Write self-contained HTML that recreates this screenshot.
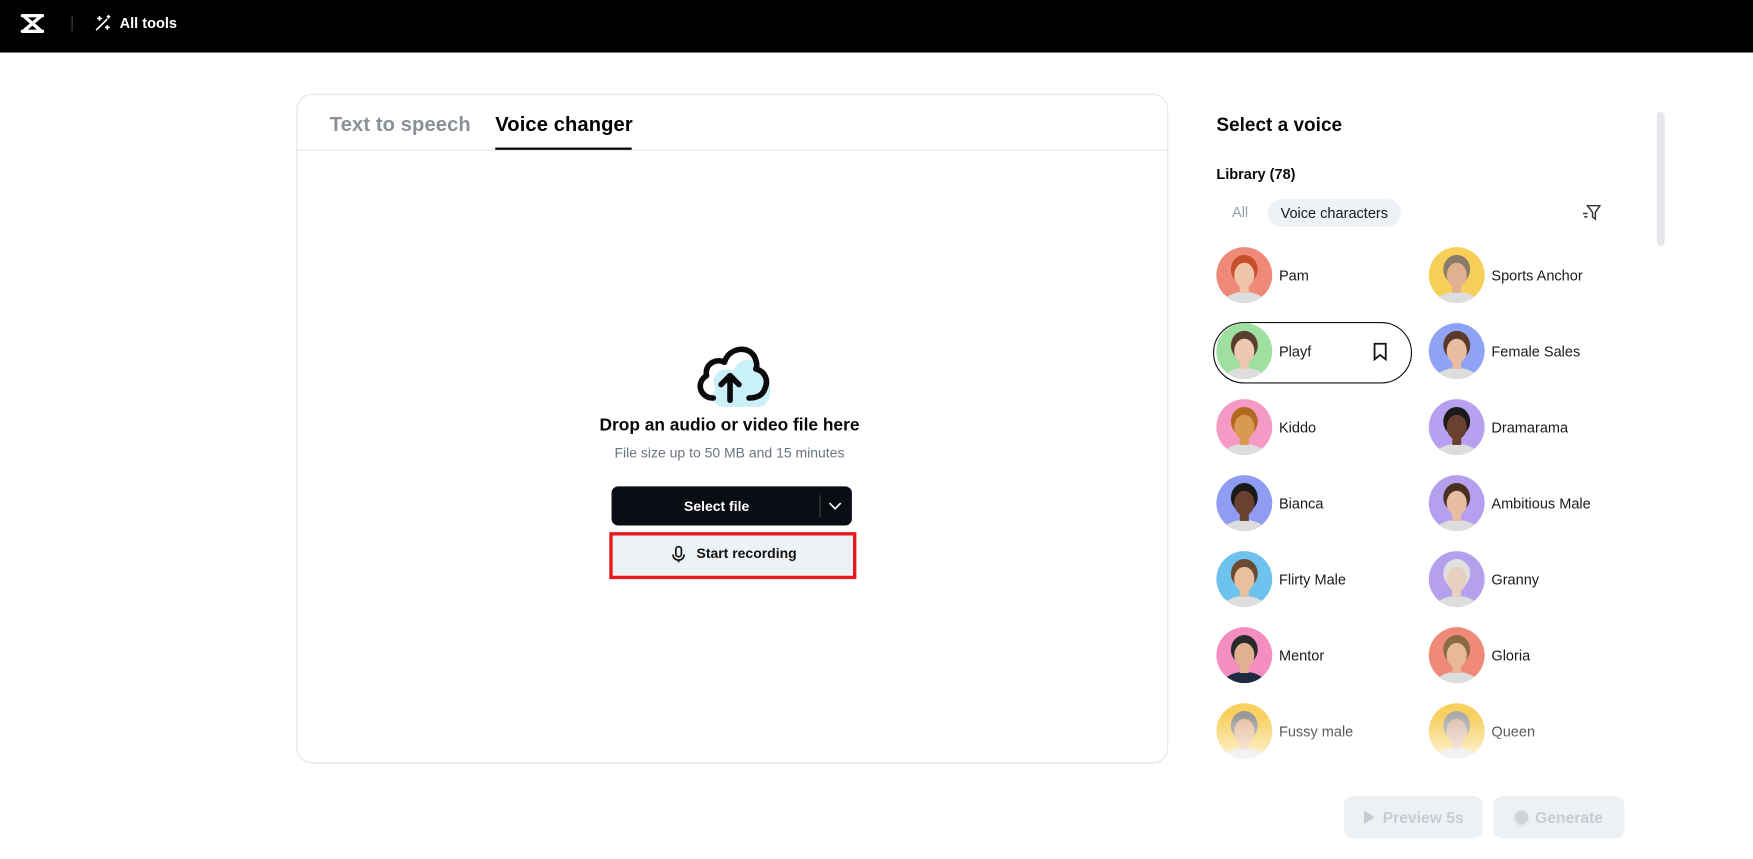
<!DOCTYPE html>
<html><head><meta charset="utf-8"><style>
*{box-sizing:border-box;margin:0;padding:0}
html,body{width:1753px;height:858px;overflow:hidden;background:#fff;font-family:"Liberation Sans",sans-serif}
#w{position:absolute;left:0;top:0;width:1568px;height:768px;transform:scale(1.11798);transform-origin:0 0}
.hdr{position:absolute;left:0;top:0;width:1568px;height:47px;background:#000}
.abs{position:absolute}
.card{position:absolute;left:265px;top:84px;width:780px;height:599px;border:1px solid #e3e5e8;border-radius:14px}
.tab{position:absolute;top:101px;font-size:18px;font-weight:bold;letter-spacing:.1px}
.av{position:absolute;width:50px;height:50px;border-radius:50%;overflow:hidden}
.nm{position:absolute;font-size:13px;color:#1a1a1a}
.btn2{position:absolute;top:712px;height:38px;background:#eef1f4;border-radius:8px;color:#c4ccd5;font-size:14px;font-weight:bold;display:flex;align-items:center;justify-content:center;gap:6px}
</style></head><body><div id="w">
<div class="hdr">
<svg class="abs" style="left:18px;top:11px" width="22" height="20" viewBox="0 0 22 20"><path d="M2 3 L20 3 M2 17 L20 17 M4 4 L18 16 M18 4 L4 16" stroke="#fff" stroke-width="3" fill="none" stroke-linecap="round"/></svg>
<div class="abs" style="left:64px;top:14px;width:1px;height:14px;background:#444"></div>
<svg class="abs" style="left:84px;top:13px" width="16" height="16" viewBox="0 0 16 16" fill="none" stroke="#fff" stroke-width="1.5"><path d="M2 14 L12 4"/><path d="M5 2 v3 M3.5 3.5 h3 M12 10 v3 M10.5 11.5 h3 M13 1v2 M12 2h2" stroke-linecap="round"/></svg>
<div class="abs" style="left:107px;top:13px;color:#fff;font-size:13px;font-weight:bold">All tools</div>
</div>

<div class="card"></div>
<div class="tab" style="left:295px;color:#8b9097">Text to speech</div>
<div class="tab" style="left:443px;color:#000">Voice changer</div>
<div class="abs" style="left:266px;top:134px;width:778px;height:1px;background:#e6e8eb"></div>
<div class="abs" style="left:443px;top:132px;width:122px;height:2px;background:#000"></div>

<svg class="abs" style="left:620px;top:306px" width="72" height="60" viewBox="0 0 72 60">
<path d="M30 58 C18 58 14 50 20 42 C14 30 26 20 36 26 C42 10 62 14 62 30 C72 32 72 58 58 58 Z" fill="#c9f1f7"/>
<path d="M18 50 C6 50 2 36 12 30 C10 20 20 14 28 18 C32 4 52 2 56 16 C58 22 56 24 56 24 C64 26 68 34 64 42 C62 48 56 50 50 50" fill="none" stroke="#0a0a0a" stroke-width="5" stroke-linecap="round" stroke-linejoin="round"/>
<path d="M33 52 V30 M25 38 L33 30 L41 38" fill="none" stroke="#0a0a0a" stroke-width="5" stroke-linecap="round" stroke-linejoin="round"/>
</svg>
<div class="abs" style="left:455px;width:395px;top:372px;text-align:center;font-size:15.5px;font-weight:bold;color:#0a0a0a">Drop an audio or video file here</div>
<div class="abs" style="left:455px;width:395px;top:398px;text-align:center;font-size:12.5px;color:#6b7280">File size up to 50 MB and 15 minutes</div>
<div class="abs" style="left:547px;top:435px;width:215px;height:35px;background:#0b0d14;border-radius:6px"></div>
<div class="abs" style="left:547px;top:446px;width:188px;text-align:center;color:#fff;font-size:12.5px;font-weight:bold">Select file</div>
<div class="abs" style="left:733px;top:443px;width:1px;height:20px;background:#444"></div>
<svg class="abs" style="left:741px;top:449px" width="12" height="8" viewBox="0 0 12 8"><path d="M1 1 L6 6 L11 1" stroke="#fff" stroke-width="1.5" fill="none"/></svg>
<div class="abs" style="left:545px;top:476px;width:221px;height:42px;border:3px solid #e6191c;background:#eff2f5"></div>
<svg class="abs" style="left:601px;top:488px" width="12" height="16" viewBox="0 0 12 16" fill="none" stroke="#111" stroke-width="1.5"><rect x="3.5" y="1" width="5" height="9" rx="2.5"/><path d="M1 8 a5 5 0 0 0 10 0 M6 13 v2"/></svg>
<div class="abs" style="left:623px;top:488px;font-size:12.5px;font-weight:bold;color:#111">Start recording</div>

<div class="abs" style="left:1088px;top:102px;font-size:17px;font-weight:bold;color:#0a0a0a">Select a voice</div>
<div class="abs" style="left:1088px;top:148px;font-size:13px;font-weight:bold;color:#0a0a0a">Library (78)</div>
<div class="abs" style="left:1102px;top:182px;font-size:13px;color:#9aa0a8">All</div>
<div class="abs" style="left:1134px;top:178px;width:119px;height:25px;background:#eef1f5;border-radius:13px;font-size:13px;color:#1a1a1a;line-height:25px;text-align:center">Voice characters</div>
<svg class="abs" style="left:1415px;top:182px" width="18" height="16" viewBox="0 0 18 16" fill="none" stroke="#333" stroke-width="1.3"><path d="M5 2 H16 L12 8 V14 L9.5 12 V8 Z M1 9 h4 M2 12 h3"/></svg>
<div class="abs" style="left:1482px;top:100px;width:7px;height:120px;background:#e5e7eb;border-radius:4px"></div>
<div class="abs" style="left:1085px;top:288px;width:178px;height:55px;border:1.5px solid #111;border-radius:28px"></div>
<svg class="abs" style="left:1228px;top:306px" width="13" height="17" viewBox="0 0 13 17"><path d="M1.5 1.5 H11.5 V15.5 L6.5 11.5 L1.5 15.5 Z" fill="none" stroke="#111" stroke-width="1.6"/></svg>

<div id="list"></div>
<div class="abs" style="left:1080px;top:640px;width:400px;height:45px;background:linear-gradient(rgba(255,255,255,0),rgba(255,255,255,.85))"></div>

<div class="btn2" style="left:1202px;width:124px"><svg width="12" height="14" viewBox="0 0 12 14"><path d="M1 1 L11 7 L1 13 Z" fill="#c4ccd5"/></svg>Preview 5s</div>
<div class="btn2" style="left:1336px;width:117px"><span style="width:12px;height:12px;border-radius:50%;background:#cfd2d6;box-shadow:0 2px 3px #ddd"></span>Generate</div>
</div>
<script>
var d=[["Pam","#f08a78","#f0c4a8","#c5502a"],["Sports Anchor","#f7cf58","#e0b090","#8a7a68"],["Playf","#9fdf9f","#eec8b0","#5a3f2e"],["Female Sales","#8fa3f5","#e8bca0","#5a3a28"],["Kiddo","#f59ac6","#d99a50","#b36a20"],["Dramarama","#b8a0f0","#6a4030","#1a1a1a"],["Bianca","#8f9cf2","#6a4030","#1a1a1a"],["Ambitious Male","#b5a0f0","#e8bca0","#4a3020"],["Flirty Male","#6ec3ee","#e8c0a0","#6a4a30"],["Granny","#b5a0ee","#e8d0c0","#e0e0e0"],["Mentor","#f58ec0","#e0b090","#2a2a2a"],["Gloria","#f08a78","#e8b898","#8a6a40"],["Fussy male","#f7d060","#e8c0a0","#999"],["Queen","#f7d060","#e0c0b0","#aaa"]];
var h="";d.forEach(function(v,i){var c=i%2,r=Math.floor(i/2),x=c?1278:1088,y=221+r*68;
h+='<div class="av" style="left:'+x+'px;top:'+y+'px;background:'+v[1]+'"><svg width="50" height="50" viewBox="0 0 50 50"><ellipse cx="25" cy="52" rx="20" ry="12" fill="'+(i==10?'#1e2a40':'#ddd')+'"/><ellipse cx="25" cy="20" rx="12" ry="13" fill="'+v[3]+'"/><ellipse cx="25" cy="25" rx="9" ry="11" fill="'+v[2]+'"/><rect x="21" y="33" width="8" height="8" fill="'+v[2]+'"/></svg></div><div class="nm" style="left:'+(x+56)+'px;top:'+(y+18)+'px">'+v[0]+'</div>';});
document.getElementById("list").innerHTML=h;
</script>
</body></html>
